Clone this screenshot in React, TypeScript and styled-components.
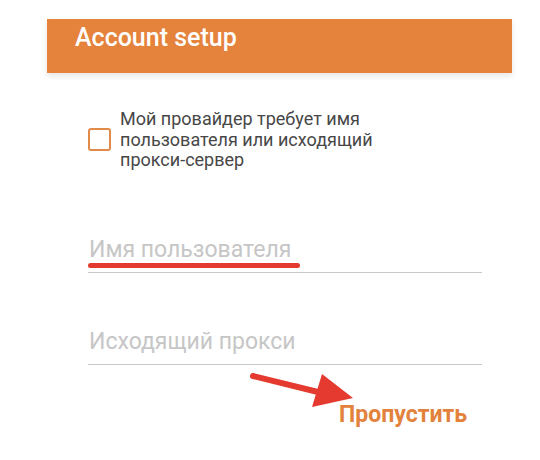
import styled, { createGlobalStyle } from 'styled-components';

const GlobalStyle = createGlobalStyle`
  body {
    margin: 0;
    background: #ffffff;
    font-family: Roboto, "Liberation Sans", sans-serif;
  }
`;

const Page = styled.div`
  padding: 19px 0 0 47px;
`;

const Header = styled.header`
  box-sizing: border-box;
  width: 465px;
  height: 54px;
  padding: 5px 28px;
  background: #e5823b;
  box-shadow: 0 3px 6px rgba(0, 0, 0, 0.1);
`;

const Title = styled.h1`
  margin: 0;
  font-size: 25px;
  font-weight: 500;
  line-height: 28px;
  color: #ffffff;
`;

const Content = styled.div`
  margin-left: 41px;
  width: 394px;
`;

const CheckRow = styled.label`
  display: flex;
  align-items: center;
  gap: 9px;
  margin-top: 36px;
`;

const CheckBox = styled.span`
  flex-shrink: 0;
  box-sizing: border-box;
  width: 23px;
  height: 23px;
  border: 2.5px solid #e08a4c;
  border-radius: 3px;
`;

const CheckText = styled.span`
  font-size: 18px;
  line-height: 20.5px;
  color: #474747;
`;

const Field = styled.div<{ $gap: number }>`
  position: relative;
  margin-top: ${(p) => p.$gap}px;
`;

const Input = styled.input`
  display: block;
  box-sizing: content-box;
  width: 393px;
  height: 26px;
  margin: 0;
  padding: 0 0 9px 1px;
  border: none;
  border-bottom: 1.5px solid #c9c9c9;
  outline: none;
  background: transparent;
  font-family: Roboto, "Liberation Sans", sans-serif;
  font-size: 23px;
  line-height: 26px;
  color: #333;

  &::placeholder {
    color: #c6c6c6;
    opacity: 1;
  }
`;

const Mark = styled.span`
  position: absolute;
  left: 0;
  top: 26px;
  width: 212px;
  height: 5px;
  border-radius: 3px;
  background: #e23a2f;
`;

const Footer = styled.div`
  position: relative;
  display: flex;
  justify-content: flex-end;
  margin-top: 36px;
  padding-right: 15px;
`;

const SkipButton = styled.button`
  padding: 0;
  border: none;
  background: none;
  font-family: Roboto, "Liberation Sans", sans-serif;
  font-size: 23px;
  font-weight: 700;
  line-height: 27px;
  color: #e2823c;
`;

const Arrow = styled.svg`
  position: absolute;
  left: 162px;
  top: -30px;
`;

function App() {
  return (
    <Page>
      <GlobalStyle />
      <Header>
        <Title>Account setup</Title>
      </Header>
      <Content>
        <CheckRow>
          <CheckBox />
          <CheckText>
            Мой провайдер требует имя
            <br />
            пользователя или исходящий
            <br />
            прокси-сервер
          </CheckText>
        </CheckRow>
        <Field $gap={66}>
          <Input placeholder="Имя пользователя" />
          <Mark />
        </Field>
        <Field $gap={56}>
          <Input placeholder="Исходящий прокси" />
        </Field>
        <Footer>
          <Arrow width="106" height="40" viewBox="0 0 106 40">
            <line x1="3" y1="5" x2="72" y2="22" stroke="#e53a2f" strokeWidth="6" strokeLinecap="round" />
            <polygon points="72,3 62,36 103,27" fill="#e53a2f" />
          </Arrow>
          <SkipButton>Пропустить</SkipButton>
        </Footer>
      </Content>
    </Page>
  );
}

export default App;
